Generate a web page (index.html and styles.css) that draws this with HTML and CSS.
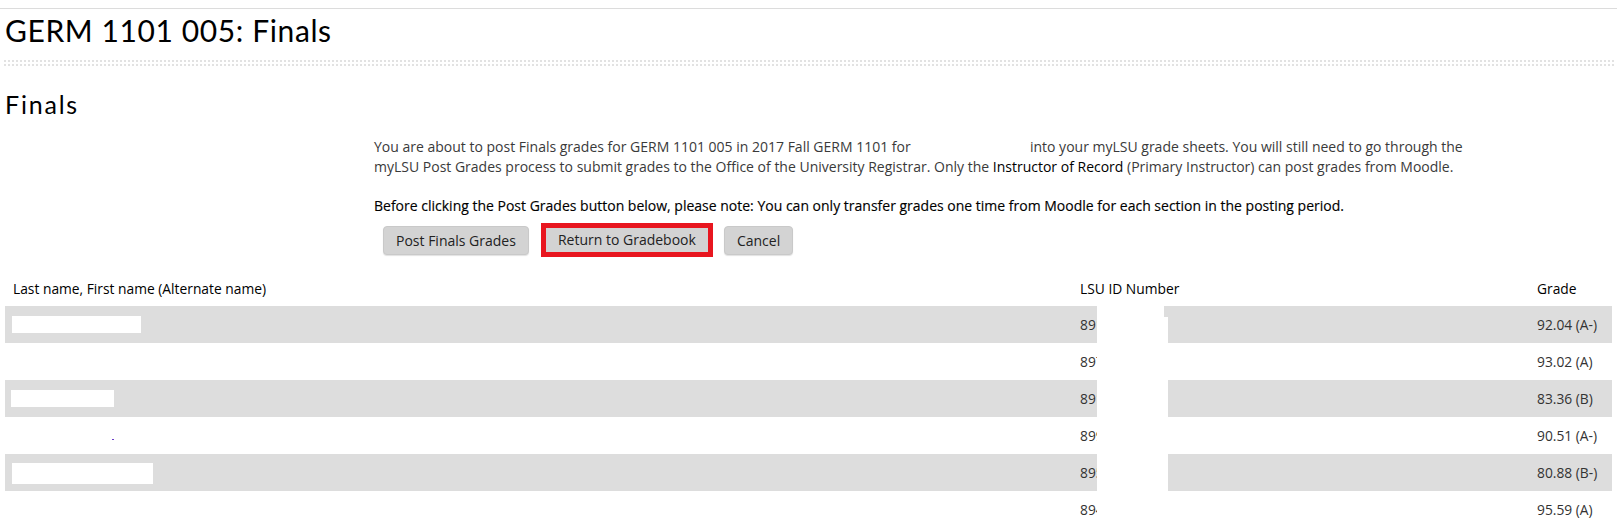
FILE: index.html
```html
<!DOCTYPE html>
<html>
<head>
<meta charset="utf-8">
<title>GERM 1101 005: Finals</title>
<link rel="stylesheet" href="styles.css">
</head>
<body>
<div class="top-rule"></div>
<h1 class="page-title">GERM 1101 005: Finals</h1>
<div class="dots"></div>
<h2 class="section-title">Finals</h2>

<div class="intro">
  <p>You are about to post Finals grades for GERM 1101 005 in 2017 Fall GERM 1101 for <span class="name-gap"></span> into your myLSU grade sheets. You will still need to go through the myLSU Post Grades process to submit grades to the Office of the University Registrar. Only the <strong>Instructor of Record</strong> (Primary Instructor) can post grades from Moodle.</p>
  <p class="note">Before clicking the Post Grades button below, please note: You can only transfer grades one time from Moodle for each section in the posting period.</p>
  <div class="actions">
    <button class="btn">Post Finals Grades</button>
    <button class="btn btn-marked">Return to Gradebook</button>
    <button class="btn">Cancel</button>
  </div>
</div>

<div class="table-wrap">
  <table class="grades">
    <colgroup>
      <col class="c-name">
      <col class="c-id">
      <col class="c-grade">
    </colgroup>
    <thead>
      <tr><th>Last name, First name (Alternate name)</th><th>LSU ID Number</th><th>Grade</th></tr>
    </thead>
    <tbody>
      <tr><td><span class="redact r1"></span></td><td>891234567</td><td>92.04 (A-)</td></tr>
      <tr><td></td><td>897654321</td><td>93.02 (A)</td></tr>
      <tr><td><span class="redact r3"></span></td><td>891122334</td><td>83.36 (B)</td></tr>
      <tr><td><span class="speck"></span></td><td>899988776</td><td>90.51 (A-)</td></tr>
      <tr><td><span class="redact r5"></span></td><td>895566778</td><td>80.88 (B-)</td></tr>
      <tr><td></td><td>894433221</td><td>95.59 (A)</td></tr>
    </tbody>
  </table>
  <div class="id-mask"></div>
</div>
</body>
</html>
```

FILE: styles.css
```css
html, body {
  margin: 0;
  padding: 0;
  background: #fff;
}
body {
  font-family: "Open Sans", "Liberation Sans", sans-serif;
  font-size: 14px;
  color: #3a3a3a;
}
.top-rule {
  margin-top: 8px;
  border-top: 1px solid #dcdcdc;
}
.page-title {
  font-family: "Lato", "Open Sans", sans-serif;
  font-weight: 400;
  font-size: 30px;
  line-height: 36px;
  margin: 3px 0 0 0;
  padding-left: 5px;
  color: #000;
  letter-spacing: 0.6px;
}
.dots {
  height: 10px;
  margin: 10px 2px 0 4px;
  background-image: conic-gradient(#e2e2e2 25%, transparent 0);
  background-size: 4px 4px;
  background-position: -2px 2px;
}
.section-title {
  font-family: "Lato", "Open Sans", sans-serif;
  font-weight: 400;
  font-size: 25px;
  line-height: 29px;
  margin: 22px 0 0 0;
  padding-left: 5px;
  color: #000;
  letter-spacing: 1.8px;
}
.intro {
  margin-left: 374px;
  width: 1110px;
  margin-top: 18px;
}
.intro p {
  margin: 0 0 19px 0;
  line-height: 20px;
}
.intro p.note {
  color: #000;
  margin-bottom: 7px;
  -webkit-text-stroke: 0.15px #000;
}
.intro strong {
  font-weight: 400;
  color: #000;
}
.name-gap {
  display: inline-block;
  width: 112px;
}
.actions {
  display: flex;
  align-items: center;
  margin-left: 9px;
}
.btn {
  font-family: "Open Sans", "Liberation Sans", sans-serif;
  font-size: 14px;
  line-height: 19px;
  color: #222;
  background: #d3d3d3;
  border: 1px solid #c9c9c9;
  border-radius: 4px;
  padding: 4px 12px;
  box-shadow: 0 1px 1px rgba(0, 0, 0, 0.12);
  cursor: pointer;
}
.btn + .btn {
  margin-left: 12px;
}
.btn-marked {
  border: 5px solid #e8161f;
  border-radius: 0;
  padding: 2px 8px 3px;
  width: 172px;
  box-shadow: none;
}
.btn-marked + .btn {
  margin-left: 11px;
}
.table-wrap {
  position: relative;
  margin: 14px 5px 0 5px;
}
.grades {
  width: 100%;
  border-collapse: collapse;
  table-layout: fixed;
  font-size: 13.8px;
}
.c-name { width: 1067px; }
.c-id { width: 457px; }
.grades th {
  text-align: left;
  font-weight: 400;
  color: #000;
  height: 35px;
  padding: 0 8px;
  line-height: 18px;
  vertical-align: middle;
}
.grades td {
  height: 37px;
  padding: 0 8px;
  line-height: 18px;
  vertical-align: middle;
  color: #333;
  white-space: nowrap;
  overflow: hidden;
}
.grades tbody tr:nth-child(odd) td {
  background: #dddddd;
}
.redact {
  display: block;
  background: #fff;
  margin-left: -1px;
}
.r1 { width: 129px; height: 17px; }
.r3 { width: 103px; height: 17px; margin-left: -2px; }
.r5 { width: 141px; height: 21px; margin-top: 1px; }
.speck {
  display: block;
  width: 2px;
  height: 1px;
  margin-left: 99px;
  margin-top: 7px;
  background: #6a3cc8;
}
.id-mask {
  position: absolute;
  left: 1092px;
  top: 35px;
  width: 71px;
  bottom: 0;
  background: #fff;
  clip-path: polygon(0 0, 67px 0, 67px 11px, 100% 11px, 100% 100%, 0 100%);
}
```
